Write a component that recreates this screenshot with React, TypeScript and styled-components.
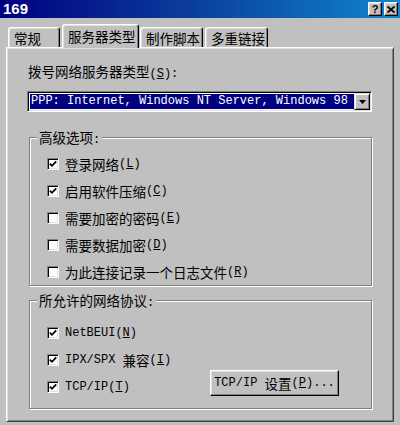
import React from "react";
import styled, { createGlobalStyle } from "styled-components";

const Global = createGlobalStyle`
  html, body { margin: 0; padding: 0; background: #c0c0c0; }
  * { box-sizing: border-box; }
`;

const CJK = `"Noto Sans CJK SC", "Noto Sans", sans-serif`;

const Window = styled.div`
  width: 400px;
  height: 425px;
  overflow: hidden;
  background: #c0c0c0;
  display: flex;
  flex-direction: column;
  font-family: ${CJK};
  font-size: 13.5px;
  color: #000;
`;

const TitleBar = styled.div`
  height: 18px;
  flex: none;
  display: flex;
  align-items: center;
  padding: 0 2px 0 3px;
  background: linear-gradient(90deg, #000080 0%, #0a3a9a 45%, #1084d0 100%);
`;

const Title = styled.span`
  flex: 1;
  color: #fff;
  font-family: "Liberation Sans", Arial, sans-serif;
  font-weight: bold;
  font-size: 15px;
  line-height: 18px;
`;

const CapButton = styled.div<{ $gap?: number }>`
  width: 14px;
  height: 14px;
  margin-left: ${(p) => p.$gap ?? 0}px;
  background: #c0c0c0;
  border-top: 1px solid #fff;
  border-left: 1px solid #fff;
  border-right: 1px solid #000;
  border-bottom: 1px solid #000;
  box-shadow: inset -1px -1px 0 #808080, inset 1px 1px 0 #dfdfdf;
  display: flex;
  align-items: center;
  justify-content: center;
  font-family: "Liberation Sans", Arial, sans-serif;
  font-weight: bold;
  font-size: 11px;
  line-height: 1;
`;

const Body = styled.div`
  flex: 1;
  display: flex;
  flex-direction: column;
  padding: 6px 6px 3px 6px;
`;

const TabRow = styled.div`
  height: 23px;
  flex: none;
  display: flex;
  align-items: flex-end;
  padding-left: 2px;
`;

const Tab = styled.div<{ $w: number; $ml: number; $active?: boolean }>`
  width: ${(p) => p.$w}px;
  margin-left: ${(p) => p.$ml}px;
  height: ${(p) => (p.$active ? 24 : 20)}px;
  margin-bottom: ${(p) => (p.$active ? -1 : 0)}px;
  padding: ${(p) => (p.$active ? 3 : 2)}px 0 0 5px;
  line-height: 16px;
  white-space: nowrap;
  background: #c0c0c0;
  border-top: 1px solid #fff;
  border-left: 1px solid #fff;
  border-right: 1px solid #000;
  border-radius: 3px 3px 0 0;
  box-shadow: inset -1px 0 0 #808080, inset 1px 1px 0 #dfdfdf;
  position: relative;
  z-index: ${(p) => (p.$active ? 1 : 0)};
`;

const Panel = styled.div`
  flex: none;
  height: 375px;
  display: flex;
  flex-direction: column;
  padding: 15px 21px 0 21px;
  border-top: 1px solid #fff;
  border-left: 1px solid #fff;
  border-right: 1px solid #404040;
  border-bottom: 1px solid #404040;
  box-shadow: inset 1px 1px 0 #dfdfdf, inset -1px -1px 0 #808080;
`;

const FieldLabel = styled.div`
  line-height: 16px;
  height: 16px;
  white-space: nowrap;
`;

const Lat = styled.span`
  font-family: "Liberation Mono", "Courier New", monospace;
  font-size: 12px;
`;

const Acc = styled.span`
  text-decoration: underline;
  text-underline-offset: 1px;
`;

const Combo = styled.div`
  margin-top: 12px;
  margin-left: -1px;
  height: 21px;
  display: flex;
  background: #fff;
  border-top: 1px solid #808080;
  border-left: 1px solid #808080;
  border-right: 1px solid #fff;
  border-bottom: 1px solid #fff;
  box-shadow: inset 1px 1px 0 #000, inset -1px -1px 0 #dfdfdf;
  padding: 1px;
`;

const ComboValue = styled.div`
  flex: 1;
  margin: 1px 0 1px 1px;
  background: #000080;
  color: #fff;
  font-family: "Liberation Mono", "Courier New", monospace;
  font-size: 12px;
  line-height: 15px;
  padding-left: 1px;
  white-space: nowrap;
  overflow: hidden;
`;

const ComboButton = styled.div`
  width: 16px;
  flex: none;
  background: #c0c0c0;
  border-top: 1px solid #dfdfdf;
  border-left: 1px solid #dfdfdf;
  border-right: 1px solid #000;
  border-bottom: 1px solid #000;
  box-shadow: inset 1px 1px 0 #fff, inset -1px -1px 0 #808080;
  display: flex;
  align-items: center;
  justify-content: center;
`;

const Group = styled.div<{ $mt: number; $pt: number; $pb: number }>`
  position: relative;
  margin-top: ${(p) => p.$mt}px;
  margin-left: 1px;
  padding: ${(p) => p.$pt}px 0 ${(p) => p.$pb}px 17px;
  border: 1px solid #808080;
  box-shadow: 1px 1px 0 #fff, inset 1px 1px 0 #fff;
  display: flex;
  flex-direction: column;
`;

const Legend = styled.span`
  position: absolute;
  top: -9px;
  left: 7px;
  padding: 0 2px;
  background: #c0c0c0;
  line-height: 16px;
  white-space: nowrap;
`;

const Row = styled.div`
  height: 27px;
  display: flex;
  align-items: center;
  white-space: nowrap;
`;

const Box = styled.div`
  width: 12px;
  height: 12px;
  flex: none;
  margin-right: 6px;
  background: #fff;
  border-top: 1px solid #808080;
  border-left: 1px solid #808080;
  border-right: 1px solid #fff;
  border-bottom: 1px solid #fff;
  box-shadow: inset 1px 1px 0 #000, inset -1px -1px 0 #dfdfdf;
  display: flex;
  align-items: center;
  justify-content: center;
`;

const PushButton = styled.div`
  width: 129px;
  height: 26px;
  margin-left: auto;
  margin-right: 32px;
  margin-bottom: 8px;
  background: #c0c0c0;
  border-top: 1px solid #fff;
  border-left: 1px solid #fff;
  border-right: 1px solid #000;
  border-bottom: 1px solid #000;
  box-shadow: inset -1px -1px 0 #808080, inset 1px 1px 0 #dfdfdf;
  display: flex;
  align-items: center;
  justify-content: center;
  line-height: 16px;
  white-space: nowrap;
`;

const Check = ({ on }: { on: boolean }) => (
  <Box>
    {on && (
      <svg width="8" height="8" viewBox="0 0 8 8">
        <polyline points="0.8,3.6 3,5.8 7.2,1.4" fill="none" stroke="#000" strokeWidth="1.8" />
      </svg>
    )}
  </Box>
);

const Key = ({ k }: { k: string }) => (
  <Lat>
    (<Acc>{k}</Acc>)
  </Lat>
);

const options = [
  { text: "登录网络", k: "L", on: true },
  { text: "启用软件压缩", k: "C", on: true },
  { text: "需要加密的密码", k: "E", on: false },
  { text: "需要数据加密", k: "D", on: false },
  { text: "为此连接记录一个日志文件", k: "R", on: false },
];

export default function App() {
  return (
    <>
      <Global />
      <Window>
        <TitleBar>
          <Title>169</Title>
          <CapButton>?</CapButton>
          <CapButton $gap={2}>
            <svg width="8" height="7" viewBox="0 0 8 7">
              <path d="M0.5 0.5 L7.5 6.5 M7.5 0.5 L0.5 6.5" stroke="#000" strokeWidth="1.8" />
            </svg>
          </CapButton>
        </TitleBar>
        <Body>
          <TabRow>
            <Tab $w={52} $ml={0}>常规</Tab>
            <Tab $w={77} $ml={2} $active>服务器类型</Tab>
            <Tab $w={63} $ml={1}>制作脚本</Tab>
            <Tab $w={63} $ml={2}>多重链接</Tab>
          </TabRow>
          <Panel>
            <FieldLabel>
              拨号网络服务器类型<Lat>(<Acc>S</Acc>):</Lat>
            </FieldLabel>
            <Combo>
              <ComboValue>PPP: Internet, Windows NT Server, Windows 98</ComboValue>
              <ComboButton>
                <svg width="7" height="4" viewBox="0 0 7 4">
                  <path d="M0 0 H7 L3.5 4 Z" fill="#000" />
                </svg>
              </ComboButton>
            </Combo>
            <Group $mt={25} $pt={12} $pb={0}>
              <Legend>
                高级选项<Lat>:</Lat>
              </Legend>
              {options.map((o) => (
                <Row key={o.k}>
                  <Check on={o.on} />
                  {o.text}
                  <Key k={o.k} />
                </Row>
              ))}
            </Group>
            <Group $mt={14} $pt={18} $pb={8}>
              <Legend>
                所允许的网络协议<Lat>:</Lat>
              </Legend>
              <Row>
                <Check on />
                <Lat>
                  NetBEUI(<Acc>N</Acc>)
                </Lat>
              </Row>
              <Row>
                <Check on />
                <Lat>IPX/SPX&nbsp;</Lat>兼容
                <Key k="I" />
              </Row>
              <Row>
                <Check on />
                <Lat>
                  TCP/IP(<Acc>T</Acc>)
                </Lat>
                <PushButton>
                  <Lat>TCP/IP&nbsp;</Lat>设置
                  <Lat>
                    (<Acc>P</Acc>)...
                  </Lat>
                </PushButton>
              </Row>
            </Group>
          </Panel>
        </Body>
      </Window>
    </>
  );
}
